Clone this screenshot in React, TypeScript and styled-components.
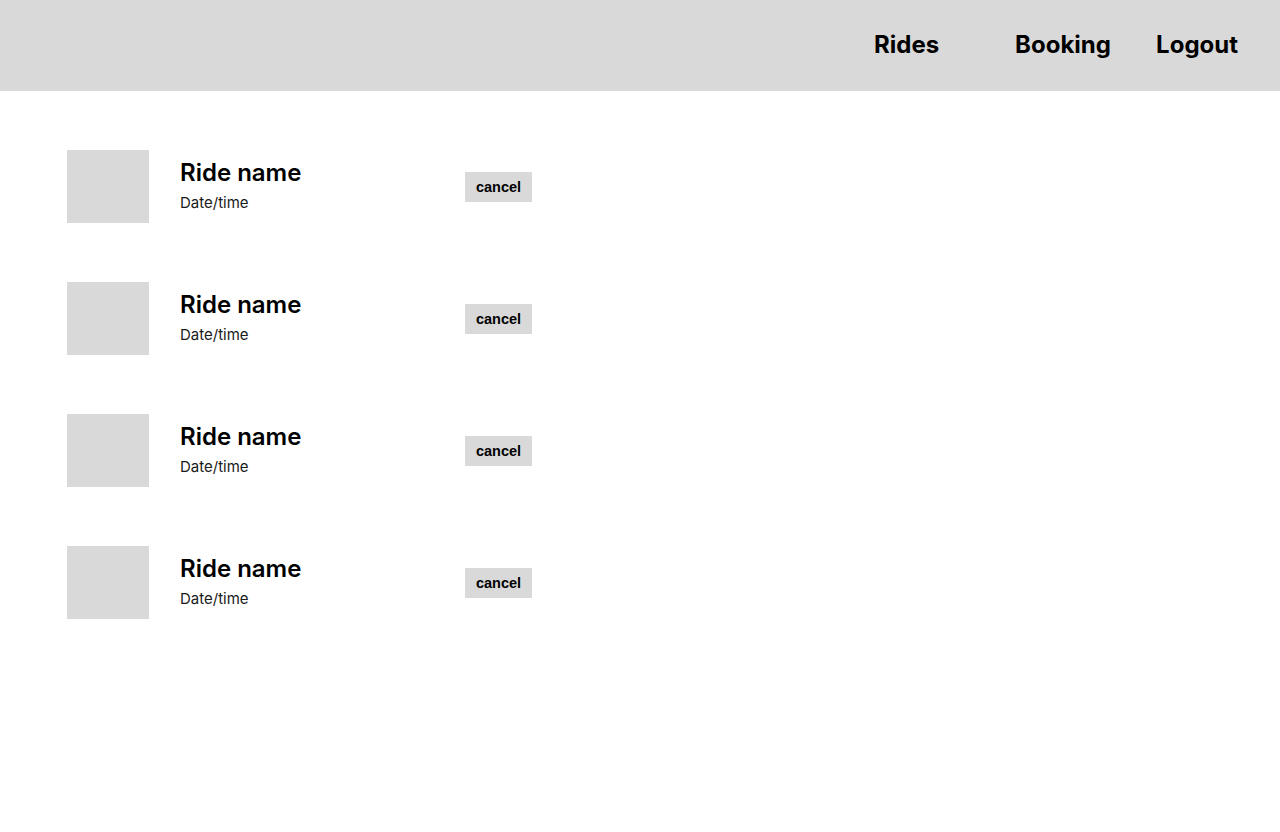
import React from 'react'
import styled, { createGlobalStyle } from 'styled-components'

const GlobalStyle = createGlobalStyle`
  body {
    margin: 0;
    background: #ffffff;
    font-family: 'Inter', 'Noto Sans', sans-serif;
    color: #000000;
  }
`

const Header = styled.header`
  height: 91px;
  box-sizing: border-box;
  background: #d9d9d9;
  display: flex;
  justify-content: flex-end;
  align-items: center;
  padding: 0 42px 2px 0;
`

const Nav = styled.nav`
  display: flex;
  align-items: center;
`

const NavLink = styled.a<{ $last?: boolean }>`
  width: ${(p) => (p.$last ? 'auto' : '141px')};
  font-size: 24px;
  font-weight: 700;
  line-height: 29px;
  color: #000;
  text-decoration: none;
  cursor: pointer;
`

const List = styled.main`
  display: flex;
  flex-direction: column;
  gap: 59px;
  padding: 59px 0 0 67px;
`

const Row = styled.div`
  display: flex;
  align-items: center;
  height: 73px;
`

const Thumb = styled.div`
  width: 82px;
  height: 73px;
  background: #d9d9d9;
  flex-shrink: 0;
`

const Info = styled.div`
  width: 285px;
  margin: 0 0 4px 31px;
  display: flex;
  flex-direction: column;
`

const Name = styled.div`
  font-size: 24px;
  font-weight: 600;
  line-height: 29px;
`

const When = styled.div`
  margin-top: 7px;
  font-size: 15px;
  line-height: 18px;
  color: #1a1a1a;
`

const CancelButton = styled.button`
  height: 30px;
  width: 67px;
  border: none;
  background: #d9d9d9;
  font-family: 'Liberation Sans', Arial, sans-serif;
  font-weight: 700;
  font-size: 14.5px;
  color: #000;
  padding: 0;
  cursor: pointer;
`

const rides = [1, 2, 3, 4]

export default function App() {
  return (
    <>
      <GlobalStyle />
      <Header>
        <Nav>
          <NavLink>Rides</NavLink>
          <NavLink>Booking</NavLink>
          <NavLink $last>Logout</NavLink>
        </Nav>
      </Header>
      <List>
        {rides.map((id) => (
          <Row key={id}>
            <Thumb />
            <Info>
              <Name>Ride name</Name>
              <When>Date/time</When>
            </Info>
            <CancelButton>cancel</CancelButton>
          </Row>
        ))}
      </List>
    </>
  )
}
